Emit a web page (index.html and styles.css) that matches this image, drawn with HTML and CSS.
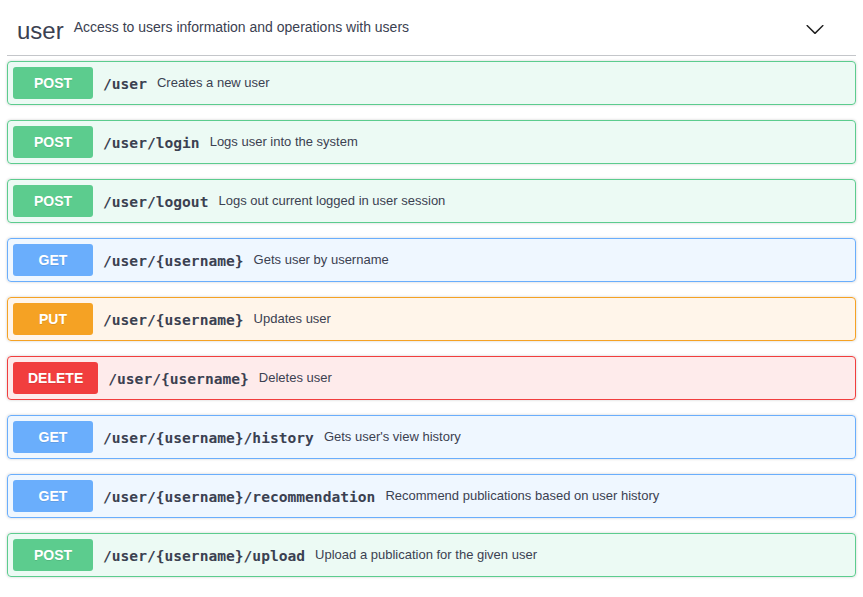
FILE: index.html
```html
<!DOCTYPE html>
<html>
<head>
<meta charset="utf-8">
<link rel="stylesheet" href="styles.css">
</head>
<body>
<div class="section">
  <h3 class="tag">
    <span class="tag-name">user</span>
    <small class="tag-desc">Access to users information and operations with users</small>
    <svg class="arrow" width="20" height="20" viewBox="0 0 20 20"><path d="M17.418 6.109c.272-.268.709-.268.979 0s.271.701 0 .969l-7.908 7.830c-.27.268-.707.268-.979 0l-7.908-7.830c-.27-.268-.27-.701 0-.969.271-.268.709-.268.979 0L10 13.25l7.418-7.141z"/></svg>
  </h3>
  <div class="op post"><span class="method">POST</span><span class="path">/user</span><span class="desc">Creates a new user</span></div>
  <div class="op post"><span class="method">POST</span><span class="path">/user/login</span><span class="desc">Logs user into the system</span></div>
  <div class="op post"><span class="method">POST</span><span class="path">/user/logout</span><span class="desc">Logs out current logged in user session</span></div>
  <div class="op get"><span class="method">GET</span><span class="path">/user/{username}</span><span class="desc">Gets user by username</span></div>
  <div class="op put"><span class="method">PUT</span><span class="path">/user/{username}</span><span class="desc">Updates user</span></div>
  <div class="op delete"><span class="method">DELETE</span><span class="path">/user/{username}</span><span class="desc">Deletes user</span></div>
  <div class="op get"><span class="method">GET</span><span class="path">/user/{username}/history</span><span class="desc">Gets user's view history</span></div>
  <div class="op get"><span class="method">GET</span><span class="path">/user/{username}/recommendation</span><span class="desc">Recommend publications based on user history</span></div>
  <div class="op post"><span class="method">POST</span><span class="path">/user/{username}/upload</span><span class="desc">Upload a publication for the given user</span></div>
</div>
</body>
</html>
```
FILE: styles.css
```css
html, body {
  margin: 0;
  padding: 0;
  background: #fff;
}
body {
  font-family: "Liberation Sans", Arial, sans-serif;
  color: #3b4151;
}
.section {
  width: 849px;
  margin-left: 7px;
}
.tag {
  display: flex;
  align-items: flex-start;
  margin: 0 0 5px;
  padding: 10px 20px 10px 10px;
  border-bottom: 1px solid rgba(59, 65, 81, 0.3);
  font-weight: 400;
}
.tag-name {
  font-size: 24px;
  line-height: 28px;
  padding-top: 7px;
  color: #3b4151;
}
.tag-desc {
  flex: 1;
  font-size: 14px;
  line-height: 16px;
  margin-top: 9px;
  padding: 0 10px;
  color: #3b4151;
}
.arrow {
  margin-top: 9px;
  margin-right: 11px;
  fill: #1f1f1f;
}
.op {
  display: flex;
  align-items: center;
  margin: 0 0 15px;
  padding: 5px;
  border: 1px solid;
  border-radius: 4px;
  box-shadow: 0 0 3px rgba(0, 0, 0, 0.19);
}
.method {
  min-width: 80px;
  box-sizing: border-box;
  padding: 6px 15px;
  font-size: 14px;
  line-height: 20px;
  font-weight: 700;
  text-align: center;
  color: #fff;
  border-radius: 3px;
  text-shadow: 0 1px 0 rgba(0, 0, 0, 0.1);
}
.path {
  padding: 0 10px;
  font-family: "DejaVu Sans Mono", monospace;
  font-size: 14.6px;
  font-weight: 700;
  color: #3b4151;
}
.desc {
  flex: 1;
  font-size: 13px;
  line-height: 14px;
  padding-bottom: 1px;
  color: #3b4151;
}
.post { background: rgba(73, 204, 144, 0.1); border-color: #5ccc8e; }
.post .method { background: #5ccc8e; }
.get { background: rgba(97, 175, 254, 0.1); border-color: #6aaefc; }
.get .method { background: #6aaefc; }
.put { background: rgba(252, 161, 48, 0.1); border-color: #f5a224; }
.put .method { background: #f5a224; }
.delete { background: rgba(249, 62, 62, 0.1); border-color: #f13e3e; }
.delete .method { background: #f13e3e; }
```
